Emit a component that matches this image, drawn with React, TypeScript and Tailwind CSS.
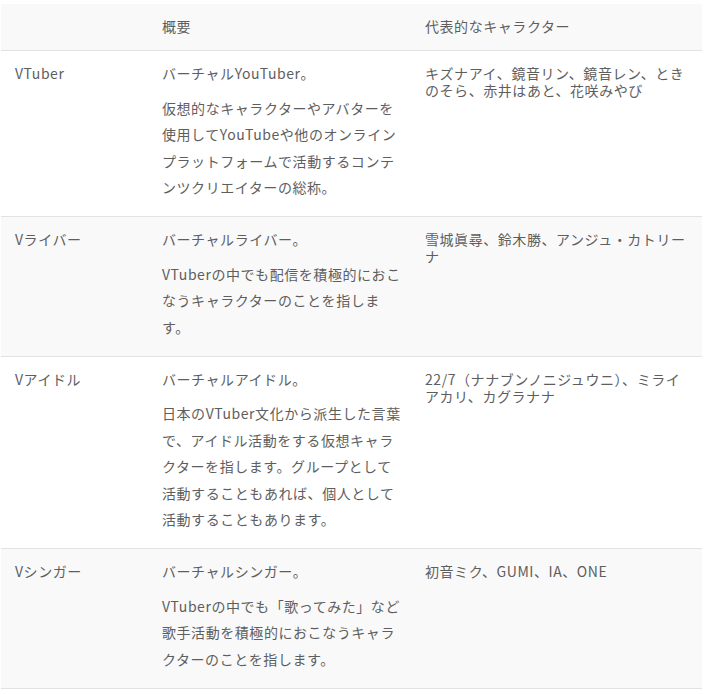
const ROWS = [
  {
    name: "VTuber",
    lead: "バーチャルYouTuber。",
    body: "仮想的なキャラクターやアバターを使用してYouTubeや他のオンラインプラットフォームで活動するコンテンツクリエイターの総称。",
    chars: "キズナアイ、鏡音リン、鏡音レン、ときのそら、赤井はあと、花咲みやび",
  },
  {
    name: "Vライバー",
    lead: "バーチャルライバー。",
    body: "VTuberの中でも配信を積極的におこなうキャラクターのことを指します。",
    chars: "雪城眞尋、鈴木勝、アンジュ・カトリーナ",
  },
  {
    name: "Vアイドル",
    lead: "バーチャルアイドル。",
    body: "日本のVTuber文化から派生した言葉で、アイドル活動をする仮想キャラクターを指します。グループとして活動することもあれば、個人として活動することもあります。",
    chars: "22/7（ナナブンノニジュウニ）、ミライアカリ、カグラナナ",
  },
  {
    name: "Vシンガー",
    lead: "バーチャルシンガー。",
    body: "VTuberの中でも「歌ってみた」など歌手活動を積極的におこなうキャラクターのことを指します。",
    chars: "初音ミク、GUMI、IA、ONE",
  },
];

export default function App() {
  return (
    <div
      className="min-h-screen bg-white pt-[4px] pl-[1px] text-[14px] tracking-[0.04em] text-[#5e5e5e]"
      style={{ fontFamily: '"Noto Sans CJK JP", "Noto Sans", sans-serif' }}
    >
      <div className="w-[701px]">
        {/* header */}
        <div className="grid grid-cols-[147px_263px_291px] bg-[#f9f9f9] border-b border-[#e2e2e2]">
          <div className="pl-[14px] pt-[14px] pb-[15px] leading-[17px]" />
          <div className="pl-[14px] pr-[9px] pt-[14px] pb-[15px] leading-[17px]">概要</div>
          <div className="pl-[14px] pr-[11px] pt-[14px] pb-[15px] leading-[17px]">代表的なキャラクター</div>
        </div>

        {ROWS.map((row, i) => (
          <div
            key={row.name}
            className={`grid grid-cols-[147px_263px_291px] border-b border-[#e2e2e2] ${
              i % 2 === 1 ? "bg-[#f9f9f9]" : "bg-white"
            }`}
          >
            <div className="pl-[14px] pt-[14px] leading-[17px]">{row.name}</div>
            <div className="pl-[14px] pr-[9px] pt-[9px] pb-[15.5px] leading-[26.5px]">
              <p>{row.lead}</p>
              <p className="mt-2">{row.body}</p>
            </div>
            <div className="pl-[14px] pr-[11px] pt-[14px] leading-[17px]">{row.chars}</div>
          </div>
        ))}
      </div>
    </div>
  );
}
